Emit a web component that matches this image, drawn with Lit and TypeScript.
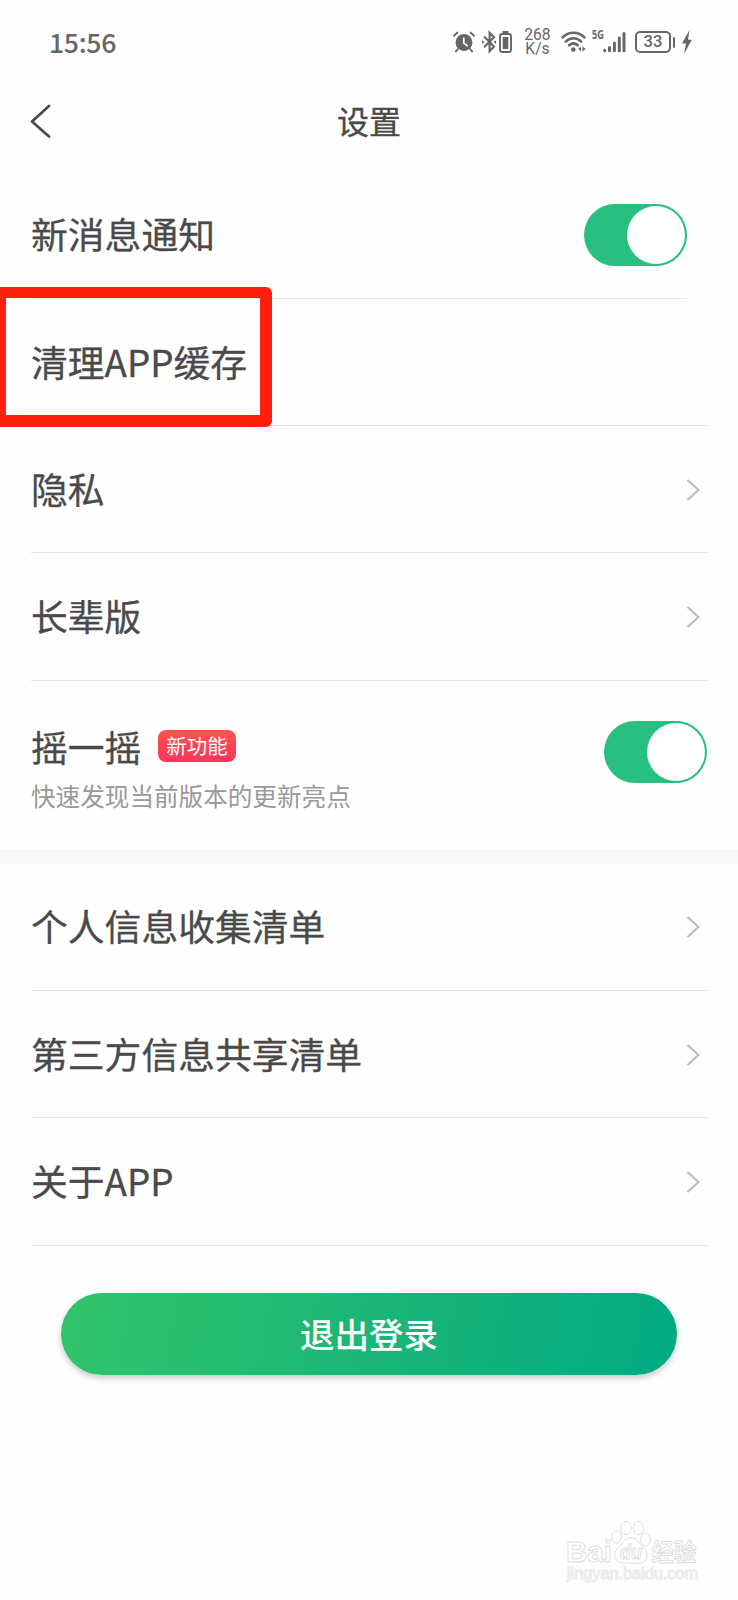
import { LitElement, html, css } from "lit";
import { customElement, property } from "lit/decorators.js";

@customElement("status-bar")
class StatusBar extends LitElement {
  static styles = css`
    :host { display: flex; align-items: center; height: 84px; padding: 0 46px 0 49px; box-sizing: border-box; color: #666; justify-content: space-between; }
    .time { font: 500 26.6px/30px "Noto Sans CJK SC", sans-serif; letter-spacing: -0.3px; }
    .icons { display: flex; align-items: center; height: 30px; }
    svg { display: block; flex: none; overflow: visible; }
    .alarm { margin-right: 7px; }
    .bt { margin-right: 3px; }
    .cell { margin-right: 12px; }
    .speed { display: flex; flex-direction: column; font: 400 15.6px/14px Roboto, sans-serif; text-align: center; width: 27px; margin-right: 10px; }
    .speed span { height: 14px; }
    .wifi { margin-right: 6px; }
    .net { font: 700 12px/12px "Open Sans", sans-serif; align-self: flex-start; margin-top: 2px; width: 11px; transform: scaleX(0.76); transform-origin: left; }
    .bars { margin-right: 9px; }
    .battery { box-sizing: border-box; width: 36px; height: 22px; border: 2px solid #666; border-radius: 5px; font: 500 16.5px/18.5px Roboto, sans-serif; text-align: center; margin-right: 2px; }
    .tip { width: 2px; height: 11px; background: #666; border-radius: 1px; margin-right: 7px; }
  `;
  render() {
    return html`
      <span class="time">15:56</span>
      <div class="icons">
        <svg class="alarm" width="22" height="22" viewBox="0 0 23 22" fill="none" stroke="#666" stroke-width="2" stroke-linecap="round">
          <circle cx="11.5" cy="11.5" r="8.8" fill="#666" stroke="none" />
          <path d="M1 4.5 4.5 1.2M22 4.5 18.5 1.2M5 18.5 3 20.8M18 18.5l2 2.3" />
          <path d="M11.3 7v5.2l3.6 2.6" stroke="#fefefe" stroke-width="1.8" />
        </svg>
        <svg class="bt" width="14" height="22" viewBox="0 0 14 22" fill="none" stroke="#666" stroke-width="2.1">
          <path d="M2 5.5 12 15.5 7.6 20.3V1.7L12 6.2 2 16.2" />
          <path d="M0 9.2 2.6 11 0 12.8zM14 9.2 11.4 11 14 12.8z" fill="#666" stroke="none" />
        </svg>
        <svg class="cell" width="13" height="22" viewBox="0 0 13 22" fill="#666">
          <path d="M3.5 0h6v3h-6z" />
          <rect x="1" y="3" width="11" height="18" rx="2.2" fill="none" stroke="#666" stroke-width="1.9" />
          <rect x="3.7" y="6" width="5.6" height="12" />
        </svg>
        <div class="speed"><span>268</span><span>K/s</span></div>
        <svg class="wifi" width="25" height="22" viewBox="0 0 25 22" fill="none" stroke="#666" stroke-width="2.5" stroke-linecap="round">
          <path d="M1.5 6.5c6.5-6.2 15.5-6.2 22 0M4.8 10.6c4.6-4.4 10.8-4.4 15.4 0M8.2 14.3c2.7-2.4 5.9-2.4 8.6 0" />
          <circle cx="12.3" cy="18.6" r="2.3" fill="#666" stroke="none" />
          <path d="M20 15.5v5l-2.7-2.500zM21.5 15.5v5l3.2-2.500z" fill="#666" stroke="none" />
        </svg>
        <span class="net">5G</span>
        <svg class="bars" width="23" height="22" viewBox="0 0 23 22" stroke="#666" stroke-width="3" stroke-linecap="round">
          <path d="M1.7 19.3v.4M6.5 16.5v3.2M11.4 12v7.7M16.3 7v12.7M21 2.5v17.2" />
        </svg>
        <div class="battery">33</div>
        <div class="tip"></div>
        <svg width="10" height="24" viewBox="0 0 10 24" fill="#666">
          <path d="M7.5 0 0 13.500h4L2 24l7.800-14.200H6z" />
        </svg>
      </div>
    `;
  }
}

@customElement("toggle-switch")
class ToggleSwitch extends LitElement {
  static styles = css`
    :host { display: flex; justify-content: flex-end; box-sizing: border-box; width: 103px; height: 62px; padding: 2px; border-radius: 31px; background: #28c07f; }
    .knob { width: 58px; height: 58px; border-radius: 50%; background: #fff; }
  `;
  render() {
    return html`<div class="knob"></div>`;
  }
}

@customElement("setting-row")
class SettingRow extends LitElement {
  @property() label = "";
  @property({ type: Boolean }) arrow = false;
  static styles = css`
    :host { display: flex; align-items: center; justify-content: space-between; box-sizing: border-box; height: 127.3px; margin: 0 31px; border-bottom: 1.6px solid #e4e4e4; }
    .label { font: 400 36.8px/54px "Noto Sans CJK SC", sans-serif; color: #4a4a4a; margin-bottom: 3px; -webkit-text-stroke: 0.3px #4a4a4a; }
    .arrow { display: block; margin-right: 7px; margin-top: 1px; }
  `;
  render() {
    return html`
      <span class="label">${this.label}</span>
      ${this.arrow
        ? html`<svg class="arrow" width="14" height="22" viewBox="0 0 14 22" fill="none" stroke="#bcbcbc" stroke-width="2.2"><path d="M1.5 1 12.5 11 1.5 21" /></svg>`
        : html`<slot></slot>`}
    `;
  }
}

@customElement("site-mark")
class SiteMark extends LitElement {
  static styles = css`
    :host { display: block; width: 136px; height: 66px; }
    svg { display: block; }
    text { font-family: "Liberation Sans", "Noto Sans CJK SC", sans-serif; font-weight: 700; }
    .url { font-weight: 400; stroke-width: 1.3px; stroke: #ececec; }
  `;
  render() {
    return html`<svg width="136" height="66" viewBox="0 0 136 66" fill="#fff" stroke="#dedede" stroke-width="1">
      <text x="0" y="42" font-size="30" textLength="46" lengthAdjust="spacingAndGlyphs">Bai</text>
      <ellipse cx="50.500" cy="17" rx="5" ry="6.200" />
      <ellipse cx="60" cy="8" rx="5.200" ry="6.800" />
      <ellipse cx="72.500" cy="8" rx="5.200" ry="6.800" />
      <ellipse cx="79.500" cy="19.500" rx="5" ry="6.200" />
      <path d="M65 17.500c5 0 7 4 10 7.500 4 4 7 7 6 12-1 6-6 6.500-16 6.500s-15-1-16-6.500c-1-5 2-8 6-12 3-3.500 5-7.500 10-7.500z" />
      <text x="54" y="39" font-size="20" font-style="italic" textLength="22" lengthAdjust="spacingAndGlyphs">du</text>
      <text x="85.500" y="41" font-size="23.500" textLength="45" lengthAdjust="spacingAndGlyphs">经验</text>
      <text class="url" x="1" y="59" font-size="16" textLength="131" lengthAdjust="spacingAndGlyphs">jingyan.baidu.com</text>
    </svg>`;
  }
}

@customElement("app-root")
class AppRoot extends LitElement {
  static styles = css`
    :host { display: flex; flex-direction: column; position: relative; width: 738px; height: 1600px; background: #fefefe; overflow: hidden; font-family: "Noto Sans CJK SC", sans-serif; color: #4a4a4a; }
    .nav { display: grid; grid-template-columns: 1fr auto 1fr; align-items: center; height: 73px; padding: 0 30px; margin-bottom: 14.6px; }
    .back { display: block; }
    .title { font-size: 32px; line-height: 46px; margin-bottom: 2px; -webkit-text-stroke: 0.3px #4a4a4a; }
    .first { margin-right: 51px; }
    .shake { display: flex; justify-content: space-between; box-sizing: border-box; height: 168px; padding: 40px 31px 0; }
    .line { display: flex; height: 52px; align-items: center; gap: 16.5px; }
    .name { font-size: 36.8px; line-height: 54px; margin-bottom: 2px; -webkit-text-stroke: 0.3px #4a4a4a; }
    .badge { box-sizing: border-box; width: 78px; height: 32px; border-radius: 8px; background: linear-gradient(#fb564c, #fb345c); color: #fff; font-size: 20.5px; line-height: 30px; text-align: center; margin-bottom: 1px; }
    .sub { font-size: 24.6px; line-height: 36px; margin-top: 4px; color: #999; }
    .band { height: 15px; background: #f7f7f7; flex: none; }
    .logout { margin: 47px 61px 0; height: 82px; flex: none; border-radius: 41px; background: linear-gradient(100deg, #32c46a, #02a983); color: #fff; font: 500 34.5px/80px "Noto Sans CJK SC", sans-serif; box-shadow: 0 3px 6px rgba(0, 0, 0, 0.22); text-align: center; }
    .mark { align-self: flex-end; margin: 145px 36px 0 0; }
    .highlight { position: absolute; left: -6px; top: 287px; width: 278px; height: 140px; box-sizing: border-box; border: solid #ff2010; border-width: 11.5px 12px 12px 12px; border-radius: 6px; }
  `;
  render() {
    return html`
      <status-bar></status-bar>
      <div class="nav">
        <svg class="back" width="22" height="34" viewBox="0 0 22 34" fill="none" stroke="#4a4a4a" stroke-width="2.7" stroke-linecap="round" stroke-linejoin="round"><path d="M19 2 2 17.5 19 32.5" /></svg>
        <div class="title">设置</div>
      </div>
      <setting-row class="first" label="新消息通知"><toggle-switch></toggle-switch></setting-row>
      <setting-row label="清理APP缓存"></setting-row>
      <setting-row label="隐私" arrow></setting-row>
      <setting-row label="长辈版" arrow></setting-row>
      <div class="shake">
        <div>
          <div class="line"><span class="name">摇一摇</span><span class="badge">新功能</span></div>
          <div class="sub">快速发现当前版本的更新亮点</div>
        </div>
        <toggle-switch></toggle-switch>
      </div>
      <div class="band"></div>
      <setting-row label="个人信息收集清单" arrow></setting-row>
      <setting-row label="第三方信息共享清单" arrow></setting-row>
      <setting-row label="关于APP" arrow></setting-row>
      <div class="logout">退出登录</div>
      <site-mark class="mark"></site-mark>
      <div class="highlight"></div>
    `;
  }
}
